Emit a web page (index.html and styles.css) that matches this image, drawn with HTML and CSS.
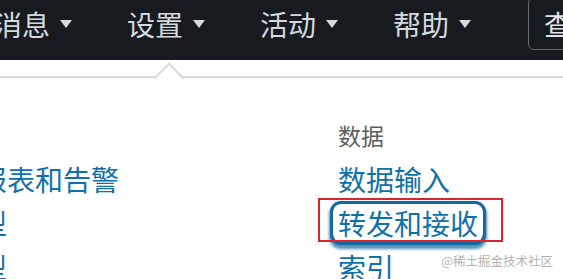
FILE: index.html
```html
<!DOCTYPE html>
<html lang="zh-CN">
<head>
    <meta charset="UTF-8">
    <meta name="viewport" content="width=device-width, initial-scale=1.0">
    <title>设置</title>
    <link rel="stylesheet" href="styles.css">
</head>
<body>
    <header class="navbar">
        <nav class="nav-list">
            <a class="nav-item">消息<span class="caret"></span></a>
            <a class="nav-item">设置<span class="caret"></span></a>
            <a class="nav-item">活动<span class="caret"></span></a>
            <a class="nav-item">帮助<span class="caret"></span></a>
        </nav>
        <div class="search-box">查找</div>
    </header>

    <div class="menu">
        <div class="menu-columns">
            <div class="menu-col">
                <h3 class="menu-heading">知识</h3>
                <ul class="menu-links">
                    <li><a class="menu-link">搜索、报表和告警</a></li>
                    <li><a class="menu-link">数据模型</a></li>
                    <li><a class="menu-link">事件类型</a></li>
                </ul>
            </div>
            <div class="menu-col">
                <h3 class="menu-heading">数据</h3>
                <ul class="menu-links">
                    <li><a class="menu-link">数据输入</a></li>
                    <li><a class="menu-link focused">转发和接收</a></li>
                    <li><a class="menu-link">索引</a></li>
                </ul>
            </div>
        </div>
    </div>

    <div class="watermark">@稀土掘金技术社区</div>
</body>
</html>
```

FILE: styles.css
```css
body {
    margin: 0;
    width: 563px;
    height: 279px;
    overflow: hidden;
    position: relative;
    background: #fff;
    font-family: "Noto Sans CJK SC", "Noto Sans", sans-serif;
}
.navbar {
    height: 60px;
    background: #171b20;
    display: flex;
    align-items: flex-start;
    position: relative;
}
.nav-list {
    display: flex;
    gap: 55px;
    margin-left: -6px;
    padding-top: 10px;
}
.nav-item {
    display: flex;
    align-items: center;
    gap: 10px;
    font-size: 28px;
    line-height: 28px;
    color: #d4d9de;
}
.caret {
    width: 0;
    height: 0;
    border-left: 6.5px solid transparent;
    border-right: 6.5px solid transparent;
    border-top: 8px solid #d4d9de;
}
.search-box {
    position: absolute;
    left: 528px;
    top: -3px;
    width: 120px;
    height: 53px;
    border: 1px solid #656b74;
    border-radius: 6px;
    padding: 9px 0 0 15px;
    box-sizing: border-box;
    font-size: 28px;
    line-height: 34px;
    color: #e0e4e8;
}
.menu {
    margin-top: 16px;
    border-top: 2px solid #d9d9d9;
    position: relative;
}
.menu::before {
    content: "";
    position: absolute;
    left: 158px;
    top: -11px;
    width: 20px;
    height: 20px;
    background: #fff;
    border-top: 2px solid #d9d9d9;
    border-left: 2px solid #d9d9d9;
    transform: rotate(45deg);
}
.menu-columns {
    display: flex;
    margin-left: -105px;
}
.menu-col {
    width: 443px;
    flex-shrink: 0;
}
.menu-heading {
    margin: 35px 0 0;
    font-size: 23px;
    line-height: 44px;
    font-weight: 400;
    color: #5e5e5e;
}
.menu-links {
    list-style: none;
    margin: 0;
    padding: 0;
}
.menu-links li {
    height: 44px;
    display: flex;
    align-items: center;
    white-space: nowrap;
}
.menu-link {
    font-size: 28px;
    line-height: 38px;
    color: #0f70aa;
}
.menu-link.focused {
    position: relative;
    display: inline-block;
    padding: 0 5px;
    margin-left: -5px;
    border-radius: 8px;
    box-shadow: 0 0 0 3px #1768a0, 0 3px 3px 4px rgba(23, 104, 160, 0.75);
}
.menu-link.focused::after {
    content: "";
    position: absolute;
    left: -15px;
    right: -20px;
    top: -6px;
    bottom: 0;
    border: 2px solid #d9262e;
}
.watermark {
    position: absolute;
    right: 10px;
    bottom: 11px;
    font-size: 12.5px;
    line-height: 14px;
    color: rgba(150, 150, 150, 0.75);
}
```
